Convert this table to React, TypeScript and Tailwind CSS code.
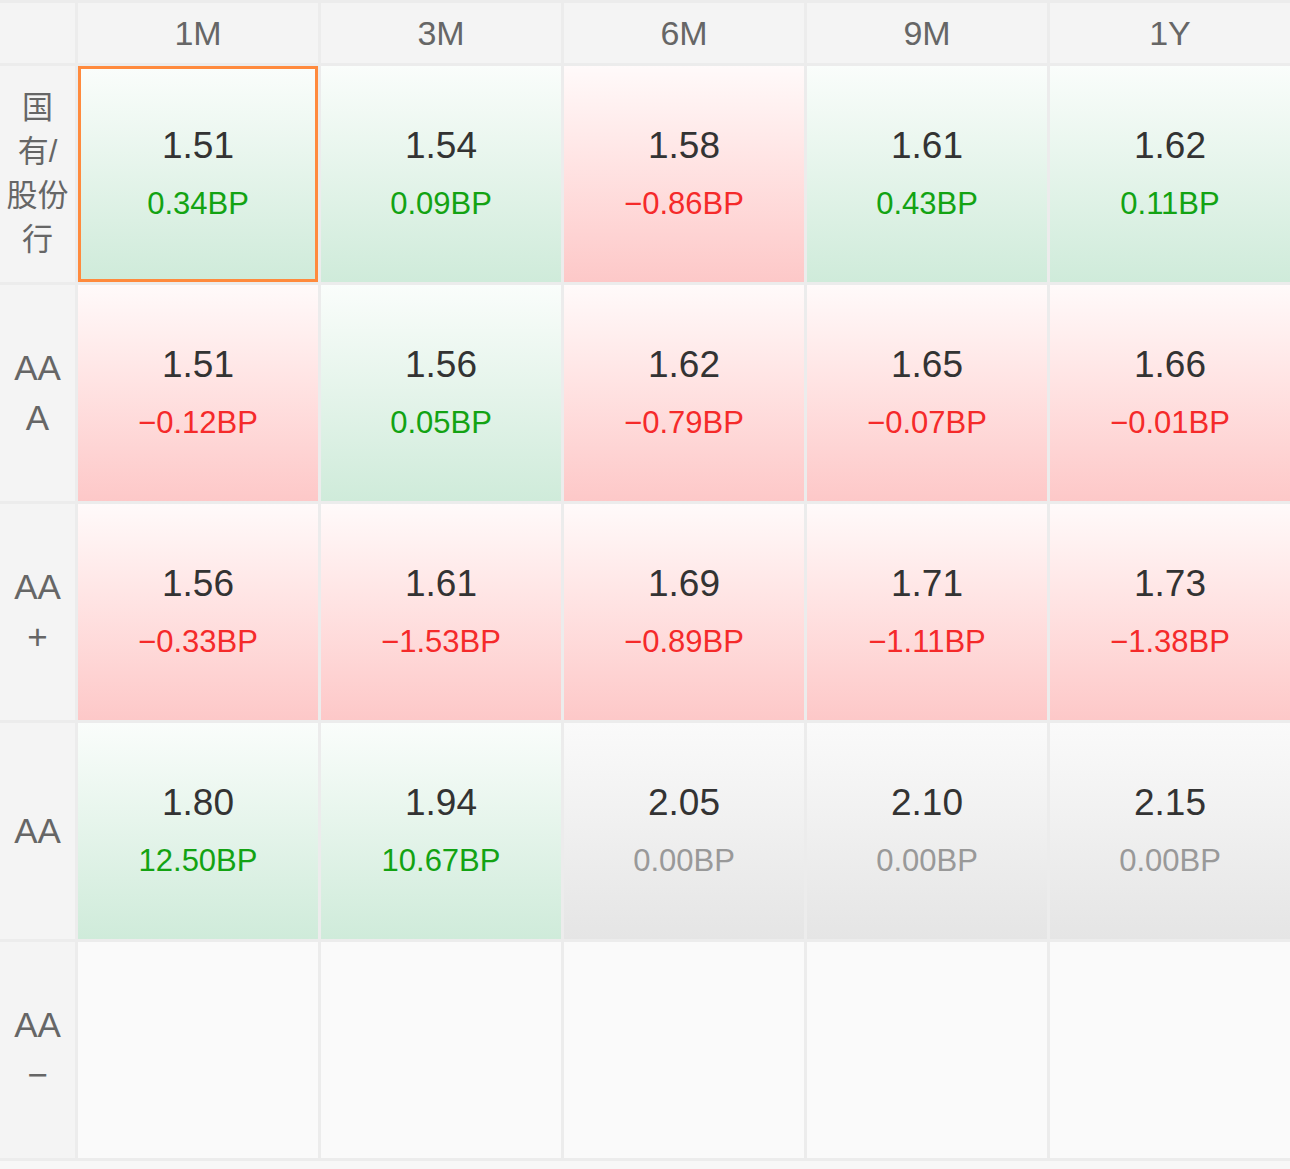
import React from "react";

type Tone = "up" | "down" | "flat";
type Cell = { v: string; bp: string; t: Tone } | null;

const headers = ["1M", "3M", "6M", "9M", "1Y"];

const rows: { label: React.ReactNode; cells: Cell[] }[] = [
  {
    label: (
      <div className="flex flex-col items-center text-[31px] leading-[44px]">
        <span>国</span>
        <span>有/</span>
        <span>股份</span>
        <span>行</span>
      </div>
    ),
    cells: [
      { v: "1.51", bp: "0.34BP", t: "up" },
      { v: "1.54", bp: "0.09BP", t: "up" },
      { v: "1.58", bp: "−0.86BP", t: "down" },
      { v: "1.61", bp: "0.43BP", t: "up" },
      { v: "1.62", bp: "0.11BP", t: "up" },
    ],
  },
  {
    label: (
      <div className="flex flex-col items-center text-[35px] leading-[50px]">
        <span>AA</span>
        <span>A</span>
      </div>
    ),
    cells: [
      { v: "1.51", bp: "−0.12BP", t: "down" },
      { v: "1.56", bp: "0.05BP", t: "up" },
      { v: "1.62", bp: "−0.79BP", t: "down" },
      { v: "1.65", bp: "−0.07BP", t: "down" },
      { v: "1.66", bp: "−0.01BP", t: "down" },
    ],
  },
  {
    label: (
      <div className="flex flex-col items-center text-[35px] leading-[50px]">
        <span>AA</span>
        <span>+</span>
      </div>
    ),
    cells: [
      { v: "1.56", bp: "−0.33BP", t: "down" },
      { v: "1.61", bp: "−1.53BP", t: "down" },
      { v: "1.69", bp: "−0.89BP", t: "down" },
      { v: "1.71", bp: "−1.11BP", t: "down" },
      { v: "1.73", bp: "−1.38BP", t: "down" },
    ],
  },
  {
    label: (
      <div className="flex flex-col items-center text-[35px] leading-[50px]">
        <span>AA</span>
      </div>
    ),
    cells: [
      { v: "1.80", bp: "12.50BP", t: "up" },
      { v: "1.94", bp: "10.67BP", t: "up" },
      { v: "2.05", bp: "0.00BP", t: "flat" },
      { v: "2.10", bp: "0.00BP", t: "flat" },
      { v: "2.15", bp: "0.00BP", t: "flat" },
    ],
  },
  {
    label: (
      <div className="flex flex-col items-center text-[35px] leading-[50px]">
        <span>AA</span>
        <span>−</span>
      </div>
    ),
    cells: [null, null, null, null, null],
  },
];

function DataCell({ c, selected }: { c: Cell; selected: boolean }) {
  if (!c) return <div className="bg-[#fafafa]" />;
  const bg =
    c.t === "up"
      ? "bg-gradient-to-b from-[#fafdfb] to-[#cfebda]"
      : c.t === "down"
      ? "bg-gradient-to-b from-[#fffafa] to-[#fdc8c8]"
      : "bg-gradient-to-b from-[#fafafa] to-[#e5e5e5]";
  const bpColor =
    c.t === "up" ? "text-[#13a313]" : c.t === "down" ? "text-[#f52a2a]" : "text-[#999999]";
  return (
    <div
      className={`${bg} flex flex-col items-center justify-center ${
        selected ? "border-[3px] border-[#ff8a3d]" : ""
      }`}
    >
      <div className="text-[37px] leading-[44px] text-[#333333] font-medium">{c.v}</div>
      <div className={`mt-[16px] text-[31px] leading-[40px] ${bpColor}`}>{c.bp}</div>
    </div>
  );
}

export default function App() {
  return (
    <div
      className="w-[1290px] h-[1169px] bg-[#f7f7f7]"
      style={{ fontFamily: '"Liberation Sans", "Noto Sans CJK SC", sans-serif' }}
    >
      <div className="grid grid-cols-[75px_repeat(5,240px)] grid-rows-[60px_repeat(5,216px)] gap-[3px] bg-[#ececec] py-[3px]">
        <div className="bg-[#f4f4f4]" />
        {headers.map((h) => (
          <div
            key={h}
            className="bg-[#f4f4f4] flex items-center justify-center text-[34px] text-[#666666]"
          >
            {h}
          </div>
        ))}
        {rows.map((r, ri) => (
          <React.Fragment key={ri}>
            <div className="bg-[#f4f4f4] flex items-center justify-center text-[#666666]">
              {r.label}
            </div>
            {r.cells.map((c, ci) => (
              <DataCell key={ci} c={c} selected={ri === 0 && ci === 0} />
            ))}
          </React.Fragment>
        ))}
      </div>
    </div>
  );
}
